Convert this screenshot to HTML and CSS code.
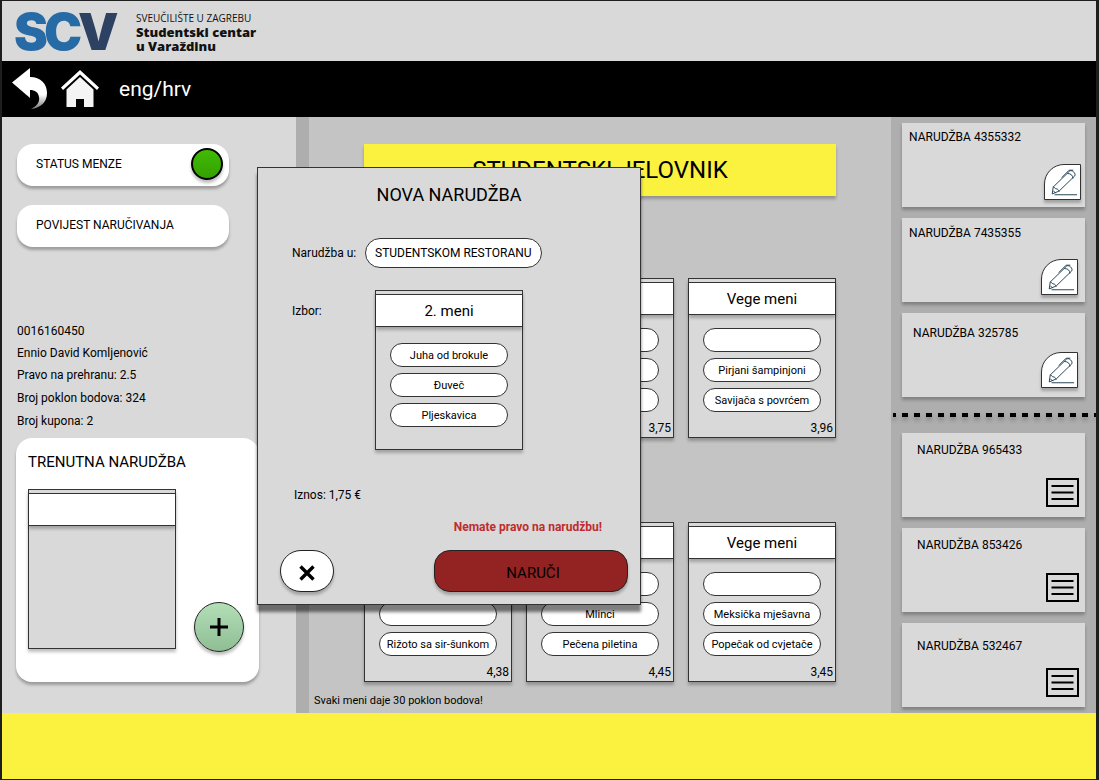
FILE: index.html
```html
<!DOCTYPE html>
<html lang="hr">
<head>
<meta charset="utf-8">
<meta name="viewport" content="width=device-width, initial-scale=1">
<title>Studentski jelovnik</title>
<link rel="stylesheet" href="styles.css">
</head>
<body>
<svg class="sprite" aria-hidden="true">
  <symbol id="icon-pencil" viewBox="0 0 36 36">
    <g fill="none" stroke="#1f3d4f" stroke-width="1" stroke-linejoin="round" stroke-linecap="round">
      <path d="M8.500 23 L25.500 6.500 C28 4.500 32.500 9 31 11.500 L14.500 27.500 L7.500 30.500 Z"/>
      <path d="M8.500 23 L10.500 25 L12.500 25.500 L14.500 27.500 M23.500 9 C27 9 29 11 29 14 M17.500 13 L25 5.500 L29 5.500"/>
      <path d="M8.500 27.500 L10.500 29.500 M10 31.500 H33"/>
    </g>
  </symbol>
  <symbol id="icon-list" viewBox="0 0 33 29">
    <rect x="1" y="1" width="31" height="27" fill="none" stroke="#000" stroke-width="2"/>
    <path d="M5.500 8 H27.500 M5.500 14.500 H27.500 M5.500 21 H27.500" stroke="#000" stroke-width="2"/>
  </symbol>
</svg>
<div class="app">
  <header class="brand">
    <svg class="brand-mark" width="104" height="44" viewBox="0 0 104 44" role="img" aria-label="SCV">
      <text x="0" y="40">S</text>
      <text class="mark-c" x="30" y="40">C</text>
      <text class="mark-v" x="64" y="40">V</text>
    </svg>
    <p class="brand-name"><span>SVEUČILIŠTE U ZAGREBU</span><strong>Studentski centar<br>u Varaždinu</strong></p>
  </header>

  <nav class="topnav">
    <a class="nav-icon" href="#" aria-label="Natrag">
      <svg width="37" height="42" viewBox="0 0 37 42">
        <defs><linearGradient id="fade" x1="0" y1="0" x2="0" y2="1"><stop offset=".65" stop-color="#fff"/><stop offset="1" stop-color="#777"/></linearGradient></defs>
        <path d="M0 14.500 L18 0 V9 C29 9 35 16 35 25 C35 34 29 40 19 41 C25 38 28 34 27 29 C26 24 23 22 18 22 V30 Z" fill="url(#fade)"/>
      </svg>
    </a>
    <a class="nav-icon" href="#" aria-label="Početna">
      <svg width="38" height="38" viewBox="0 0 38 38">
        <path d="M0 17.500 L19 0 L38 17.500 L36 20 L19 4.500 L2 20 Z" fill="#fff"/>
        <path d="M5.500 19.500 L19 7 L32.500 19.500 V37 H23 V29 H15 V37 H5.500 Z" fill="#f4f4f4"/>
      </svg>
    </a>
    <a class="lang" href="#">eng/hrv</a>
  </nav>

  <div class="workspace">
    <aside class="sidebar">
      <button class="side-button" type="button">STATUS MENZE <span class="status-dot"></span></button>
      <button class="side-button" type="button">POVIJEST NARUČIVANJA</button>
      <ul class="profile">
        <li>0016160450</li>
        <li>Ennio David Komljenović</li>
        <li>Pravo na prehranu: 2.5</li>
        <li>Broj poklon bodova: 324</li>
        <li>Broj kupona: 2</li>
      </ul>
      <section class="current">
        <h2>TRENUTNA NARUDŽBA</h2>
        <div class="current-row">
          <div class="menu-card"><div class="menu-title"></div></div>
          <button class="add" type="button" aria-label="Dodaj narudžbu">
            <svg width="18" height="20" viewBox="0 0 18 20"><path d="M0 10 H18 M9 1 V19" stroke="#000" stroke-width="3"/></svg>
          </button>
        </div>
      </section>
    </aside>

    <main class="menus">
      <h1>STUDENTSKI JELOVNIK</h1>
      <div class="menu-row">
        <article class="menu-card"><div class="menu-title"></div></article>
        <article class="menu-card">
          <div class="menu-title"></div>
          <ul class="dishes"><li></li><li></li><li></li></ul>
          <p class="price">3,75</p>
        </article>
        <article class="menu-card">
          <h3 class="menu-title">Vege meni</h3>
          <ul class="dishes"><li></li><li>Pirjani šampinjoni</li><li>Savijača s povrćem</li></ul>
          <p class="price">3,96</p>
        </article>
      </div>
      <div class="menu-row">
        <article class="menu-card">
          <div class="menu-title"></div>
          <ul class="dishes"><li></li><li></li><li>Rižoto sa sir-šunkom</li></ul>
          <p class="price">4,38</p>
        </article>
        <article class="menu-card">
          <div class="menu-title"></div>
          <ul class="dishes"><li></li><li>Mlinci</li><li>Pečena piletina</li></ul>
          <p class="price">4,45</p>
        </article>
        <article class="menu-card">
          <h3 class="menu-title">Vege meni</h3>
          <ul class="dishes"><li></li><li>Meksička mješavna</li><li>Popečak od cvjetače</li></ul>
          <p class="price">3,45</p>
        </article>
      </div>
      <p class="note">Svaki meni daje 30 poklon bodova!</p>
    </main>

    <aside class="orders">
      <article class="order">
        <h3>NARUDŽBA 4355332</h3>
        <button class="edit" type="button" aria-label="Uredi narudžbu 4355332"><svg><use href="#icon-pencil"/></svg></button>
      </article>
      <article class="order order-inset">
        <h3>NARUDŽBA 7435355</h3>
        <button class="edit" type="button" aria-label="Uredi narudžbu 7435355"><svg><use href="#icon-pencil"/></svg></button>
      </article>
      <article class="order order-raised">
        <h3>NARUDŽBA 325785</h3>
        <button class="edit" type="button" aria-label="Uredi narudžbu 325785"><svg><use href="#icon-pencil"/></svg></button>
      </article>
      <hr class="divider">
      <article class="order order-closed">
        <h3>NARUDŽBA 965433</h3>
        <button class="details" type="button" aria-label="Detalji narudžbe 965433"><svg><use href="#icon-list"/></svg></button>
      </article>
      <article class="order order-closed">
        <h3>NARUDŽBA 853426</h3>
        <button class="details" type="button" aria-label="Detalji narudžbe 853426"><svg><use href="#icon-list"/></svg></button>
      </article>
      <article class="order order-closed order-last">
        <h3>NARUDŽBA 532467</h3>
        <button class="details" type="button" aria-label="Detalji narudžbe 532467"><svg><use href="#icon-list"/></svg></button>
      </article>
    </aside>

    <section class="dialog" role="dialog" aria-labelledby="dialog-title">
      <h2 id="dialog-title">NOVA NARUDŽBA</h2>
      <div class="field">
        <span class="field-label" id="place-label">Narudžba u:</span>
        <button class="place" type="button" aria-describedby="place-label">STUDENTSKOM RESTORANU</button>
      </div>
      <div class="field field-choice">
        <span class="field-label">Izbor:</span>
        <article class="menu-card">
          <h3 class="menu-title">2. meni</h3>
          <ul class="dishes"><li>Juha od brokule</li><li>Đuveč</li><li>Pljeskavica</li></ul>
        </article>
      </div>
      <p class="total">Iznos: 1,75 €</p>
      <p class="error">Nemate pravo na narudžbu!</p>
      <div class="actions">
        <button class="close" type="button" aria-label="Zatvori">
          <svg width="16" height="16" viewBox="0 0 16 16"><path d="M1.500 1.500 L14.500 14.500 M14.500 1.500 L1.500 14.500" stroke="#000" stroke-width="3.400"/></svg>
        </button>
        <button class="submit" type="button">NARUČI</button>
      </div>
    </section>
  </div>
  <footer class="footer"></footer>
</div>
</body>
</html>
```
FILE: styles.css
```css
* { box-sizing: border-box; }

body {
  margin: 0;
  background: #1e1e1e;
  color: #000;
  font-family: Roboto, sans-serif;
  font-size: 12px;
  line-height: 16px;
}

h1, h2, h3, p, ul { margin: 0; padding: 0; font-weight: 400; }
ul { list-style: none; }
button { padding: 0; border: 0; font: inherit; color: inherit; cursor: pointer; }
svg { display: block; }
.sprite { position: absolute; width: 0; height: 0; }

.app {
  display: flex;
  flex-direction: column;
  min-height: 100vh;
  padding: 1px 3px 1px 2px;
}

/* Header */
.brand {
  display: flex;
  align-items: center;
  gap: 18px;
  height: 60px;
  padding: 2px 12px 0;
  background: #d9d9d9;
}
.brand-mark { overflow: visible; font-family: Inter, sans-serif; font-size: 51px; font-weight: 900; fill: #266ba5; }
.mark-c, .mark-v { stroke: #d9d9d9; stroke-width: 1px; paint-order: stroke; }
.mark-v { fill: #2d4163; }
.brand-name {
  display: flex;
  flex-direction: column;
  font-family: "Open Sans", sans-serif;
  font-size: 10px;
  line-height: 14px;
  color: #111;
}
.brand-name strong { font-size: 13px; font-weight: 800; }

.topnav {
  display: flex;
  align-items: center;
  gap: 12px;
  height: 56px;
  padding: 0 10px;
  background: #000;
}
.lang { margin-left: 8px; color: #fff; font-size: 21px; line-height: 24px; text-decoration: none; }

/* Columns */
.workspace {
  position: relative;
  flex: 1;
  display: grid;
  grid-template-columns: 294px 1fr 205px;
}

.sidebar { padding: 27px 15px 0; background: #d9d9d9; }
.side-button {
  display: flex;
  align-items: center;
  justify-content: space-between;
  width: 212px;
  height: 42px;
  margin-bottom: 19px;
  padding: 0 6px 3px 19px;
  border-radius: 16px;
  background: #fff;
  box-shadow: 0 3px 3px rgba(0, 0, 0, .28);
}
.status-dot {
  width: 32px;
  height: 32px;
  border: 2px solid #000;
  border-radius: 50%;
  background: linear-gradient(#40bb05, #35a100);
  box-shadow: 0 3px 3px rgba(0, 0, 0, .25);
}
.profile { margin-top: 74px; line-height: 20px; }
.profile li + li { margin-top: 2px; }
.profile li:nth-child(n + 4) { margin-top: 3px; }

.current {
  width: 243px;
  margin: 7px 0 0 -1px;
  padding: 14px 12px 30px;
  border-radius: 16px;
  background: #fff;
  box-shadow: 0 3px 3px rgba(0, 0, 0, .28);
}
.current h2 { font-size: 15px; line-height: 20px; }
.current-row { display: flex; gap: 18px; min-height: 163px; margin-top: 17px; }
.add {
  display: grid;
  place-items: center;
  align-self: flex-end;
  width: 50px;
  height: 50px;
  border: 1px solid #222;
  border-radius: 50%;
  background: linear-gradient(#b3dfb7, #8fbd94);
  box-shadow: 0 3px 3px rgba(0, 0, 0, .25);
}

/* Menu cards */
.menu-card {
  width: 148px;
  height: 160px;
  padding-top: 3px;
  border: 1px solid #333;
  background: #d9d9d9;
  box-shadow: 0 3px 3px rgba(0, 0, 0, .25);
}
.menu-title {
  height: 33px;
  border: solid #333;
  border-width: 1px 0;
  background: #fff;
  box-shadow: 0 3px 3px rgba(0, 0, 0, .25);
  font-size: 15px;
  line-height: 32px;
  text-align: center;
}
.dishes { display: grid; gap: 6px; margin: 13px 14px 0; }
.dishes li {
  height: 24px;
  border: 1px solid #333;
  border-radius: 12px;
  background: #fff;
  font-size: 11px;
  line-height: 24px;
  text-align: center;
}
.price { margin: 8px 2px 0; text-align: right; }

.menus {
  padding: 27px 55px 0;
  border-left: 13px solid #aeaeae;
  background: #c4c4c4;
}
.menus h1 {
  background: #faf23f;
  box-shadow: 0 3px 3px rgba(0, 0, 0, .25);
  font-size: 24px;
  line-height: 52px;
  text-align: center;
}
.menu-row { display: flex; justify-content: space-between; margin-top: 82px; }
.menu-row + .menu-row { margin-top: 84px; }
.note { margin: 11px 0 0 -50px; font-size: 11px; }

/* Orders */
.orders {
  display: flex;
  flex-direction: column;
  gap: 11px;
  padding: 6px 11px 6px;
  background: #aeaeae;
}
.order {
  display: flex;
  flex-direction: column;
  justify-content: space-between;
  height: 84px;
  padding: 6px 4px 7px 7px;
  background: #d9d9d9;
  box-shadow: 0 3px 3px rgba(0, 0, 0, .25);
}
.order h3 { font-size: 12px; }
.order-inset { padding: 7px 7px 7px; }
.order-raised { padding: 12px 7px 9px 11px; }
.order-closed { padding: 9px 6px 10px 15px; }
.order-last { padding-top: 15px; }
.edit {
  align-self: flex-end;
  width: 37px;
  height: 36px;
  border: 1px solid #333;
  border-radius: 20px 0 0 0;
  background: #fff;
  box-shadow: 0 3px 3px rgba(0, 0, 0, .25);
}
.edit svg { width: 35px; height: 34px; }
.details { align-self: flex-end; background: none; }
.details svg { width: 33px; height: 29px; }
.divider {
  width: auto;
  height: 4px;
  margin: 5px -11px 5px -9px;
  border: 0;
  background: repeating-linear-gradient(90deg, #000 0 3px, transparent 3px 9px, #000 9px 12px);
  filter: drop-shadow(0 3px 2px rgba(0, 0, 0, .25));
}

/* Dialog over the menu list */
.dialog {
  position: absolute;
  top: 50px;
  left: 255px;
  width: 384px;
  padding: 15px 12px 12px 22px;
  border: 1px solid #333;
  background: #d9d9d9;
  box-shadow: 0 7px 3px rgba(0, 0, 0, .5);
}
.dialog h2 { padding-right: 10px; font-size: 18px; line-height: 24px; text-align: center; }
.field { display: flex; align-items: center; margin: 31px 0 0 12px; line-height: 18px; }
.field-label { width: 73px; }
.place {
  height: 30px;
  padding: 0 9px;
  border: 1px solid #333;
  border-radius: 15px;
  background: #fff;
}
.field-choice { align-items: flex-start; gap: 10px; margin-top: 22px; line-height: 42px; }
.field-choice .dishes { margin-top: 16px; }
.total { margin: 37px 0 0 14px; }
.error { margin: 16px 26px 0; color: #bf2c2f; font-weight: 700; text-align: right; }
.actions { display: flex; justify-content: space-between; margin-top: 15px; }
.close, .submit {
  display: grid;
  place-items: center;
  height: 42px;
  border: 1px solid #222;
  box-shadow: 0 3px 3px rgba(0, 0, 0, .25);
}
.close { width: 54px; padding-top: 3px; border-radius: 21px; background: #fff; }
.submit { width: 194px; padding: 3px 0 0 4px; border-radius: 16px; background: #932323; font-size: 15px; }

.footer { height: 66px; background: #faf23f; }
```
